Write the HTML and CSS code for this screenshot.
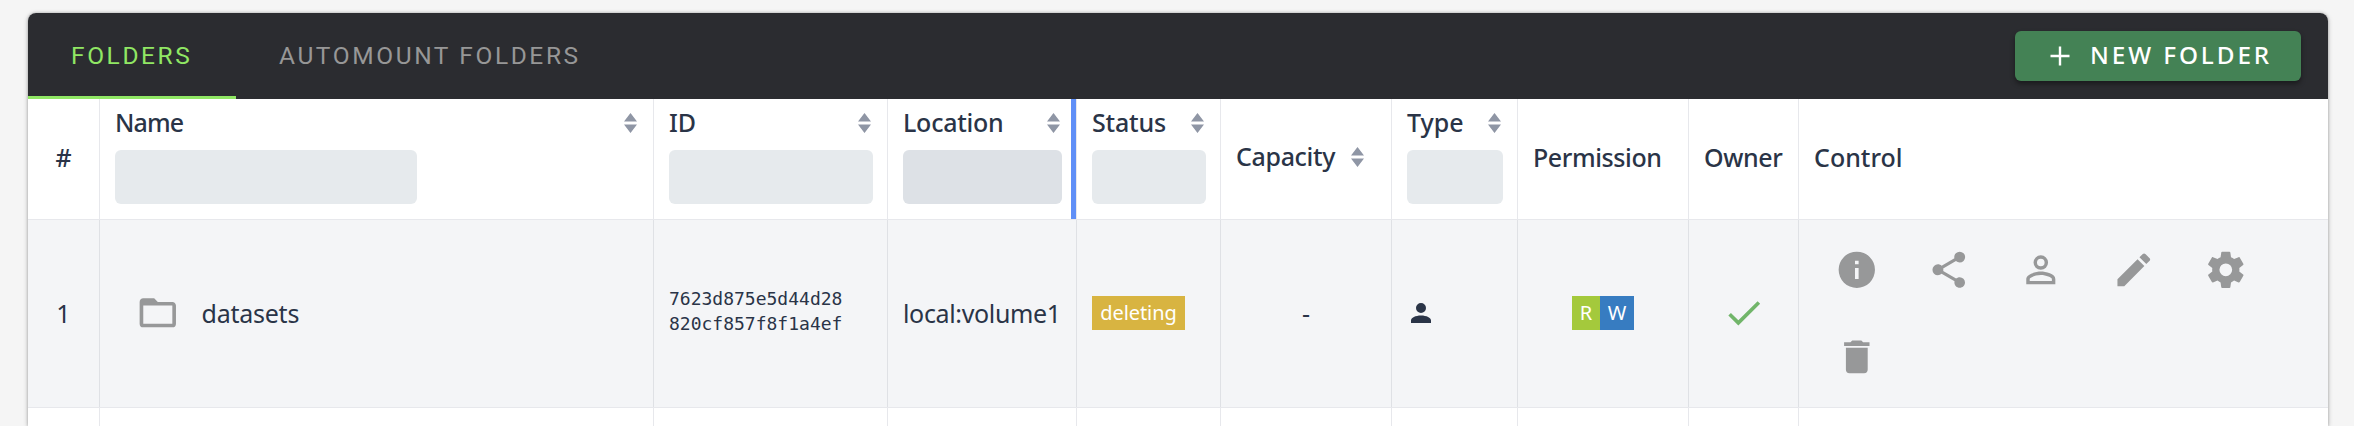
FILE: index.html
```html
<!DOCTYPE html>
<html lang="en">
<head>
<meta charset="utf-8">
<title>Folders</title>
<link rel="stylesheet" href="styles.css">
</head>
<body>
<svg class="defs" width="0" height="0" aria-hidden="true">
  <symbol id="sort" viewBox="0 0 13 20"><path d="M6.5 0 13 8.5H0zM6.5 20 0 11.5h13z"/></symbol>
</svg>
<main class="card">
  <header class="bar">
    <nav class="tabs">
      <a class="tab active"><span>FOLDERS</span></a>
      <a class="tab auto"><span>AUTOMOUNT FOLDERS</span></a>
    </nav>
    <button class="new"><svg width="20" height="20" viewBox="0 0 20 20"><path d="M10 .5v19M.5 10h19" stroke="#fff" stroke-width="2.4"/></svg><span>NEW FOLDER</span></button>
  </header>
  <section class="grid head">
    <div class="cell mid num"><span>#</span></div>
    <div class="cell"><div class="title"><span class="t-name">Name</span><svg class="sort"><use href="#sort"/></svg></div><div class="filter short"></div></div>
    <div class="cell"><div class="title"><span class="t-id">ID</span><svg class="sort"><use href="#sort"/></svg></div><div class="filter"></div></div>
    <div class="cell resizing"><div class="title"><span class="t-loc">Location</span><svg class="sort"><use href="#sort"/></svg></div><div class="filter hover"></div></div>
    <div class="cell"><div class="title"><span class="t-status">Status</span><svg class="sort"><use href="#sort"/></svg></div><div class="filter"></div></div>
    <div class="cell mid cap"><span class="t-cap">Capacity</span><svg class="sort"><use href="#sort"/></svg></div>
    <div class="cell"><div class="title"><span class="t-type">Type</span><svg class="sort"><use href="#sort"/></svg></div><div class="filter"></div></div>
    <div class="cell mid"><span class="t-perm">Permission</span></div>
    <div class="cell mid"><span class="t-owner">Owner</span></div>
    <div class="cell mid"><span class="t-ctl">Control</span></div>
  </section>
  <section class="grid row">
    <div class="cell mid num"><span>1</span></div>
    <div class="cell mid name"><svg class="icon" viewBox="0 0 24 24"><path d="M20,18H4V8H20M20,6H12L10,4H4C2.89,4 2,4.89 2,6V18A2,2 0 0,0 4,20H20A2,2 0 0,0 22,18V8C22,6.89 21.1,6 20,6Z"/></svg><span class="t-data">datasets</span></div>
    <div class="cell mid id"><span>7623d875e5d44d28<br>820cf857f8f1a4ef</span></div>
    <div class="cell mid"><span class="t-vol">local:volume1</span></div>
    <div class="cell mid"><span class="badge deleting">deleting</span></div>
    <div class="cell mid center dash"><span>-</span></div>
    <div class="cell mid type"><svg width="30" height="30" viewBox="0 0 24 24"><path d="M12,4A4,4 0 0,1 16,8A4,4 0 0,1 12,12A4,4 0 0,1 8,8A4,4 0 0,1 12,4M12,14C16.42,14 20,15.79 20,18V20H4V18C4,15.79 7.58,14 12,14Z"/></svg></div>
    <div class="cell mid center"><span class="badge r">R</span><span class="badge w">W</span></div>
    <div class="cell mid center check"><svg class="icon" viewBox="0 0 24 24"><path d="M21,7L9,19L3.5,13.5L4.91,12.09L9,16.17L19.59,5.59L21,7Z"/></svg></div>
    <div class="cell controls">
      <button><svg class="icon" viewBox="0 0 24 24"><path d="M13,9H11V7H13M13,17H11V11H13M12,2A10,10 0 0,0 2,12A10,10 0 0,0 12,22A10,10 0 0,0 22,12A10,10 0 0,0 12,2Z"/></svg></button>
      <button><svg class="icon" viewBox="0 0 24 24"><path d="M18,16.08C17.24,16.08 16.56,16.38 16.04,16.85L8.91,12.7C8.96,12.47 9,12.24 9,12C9,11.76 8.96,11.53 8.91,11.3L15.96,7.19C16.5,7.69 17.21,8 18,8A3,3 0 0,0 21,5A3,3 0 0,0 18,2A3,3 0 0,0 15,5C15,5.24 15.04,5.47 15.09,5.7L8.04,9.81C7.5,9.31 6.79,9 6,9A3,3 0 0,0 3,12A3,3 0 0,0 6,15C6.79,15 7.5,14.69 8.04,14.19L15.16,18.34C15.11,18.55 15.08,18.77 15.08,19C15.08,20.61 16.39,21.91 18,21.91C19.61,21.91 20.92,20.61 20.92,19A2.92,2.92 0 0,0 18,16.08Z"/></svg></button>
      <button><svg class="icon" viewBox="0 0 24 24"><path d="M12,4A4,4 0 0,1 16,8A4,4 0 0,1 12,12A4,4 0 0,1 8,8A4,4 0 0,1 12,4M12,5.9A2.1,2.1 0 0,0 9.9,8A2.1,2.1 0 0,0 12,10.1A2.1,2.1 0 0,0 14.1,8A2.1,2.1 0 0,0 12,5.9M12,13C14.67,13 20,14.33 20,17V20H4V17C4,14.33 9.33,13 12,13M12,14.9C9.03,14.9 5.9,16.36 5.9,17V18.1H18.1V17C18.1,16.36 14.97,14.9 12,14.9Z"/></svg></button>
      <button><svg class="icon" viewBox="0 0 24 24"><path d="M20.71,7.04C21.1,6.65 21.1,6 20.71,5.63L18.37,3.29C18,2.9 17.35,2.9 16.96,3.29L15.12,5.12L18.87,8.87M3,17.25V21H6.75L17.81,9.93L14.06,6.18L3,17.25Z"/></svg></button>
      <button><svg class="icon" viewBox="0 0 24 24"><path d="M12,15.5A3.5,3.5 0 0,1 8.5,12A3.5,3.5 0 0,1 12,8.5A3.5,3.5 0 0,1 15.5,12A3.5,3.5 0 0,1 12,15.5M19.43,12.97C19.47,12.65 19.5,12.33 19.5,12C19.5,11.67 19.47,11.34 19.43,11L21.54,9.37C21.73,9.22 21.78,8.95 21.66,8.73L19.66,5.27C19.54,5.05 19.27,4.96 19.05,5.05L16.56,6.05C16.04,5.66 15.5,5.32 14.87,5.07L14.5,2.42C14.46,2.18 14.25,2 14,2H10C9.75,2 9.54,2.18 9.5,2.42L9.13,5.07C8.5,5.32 7.96,5.66 7.44,6.05L4.95,5.05C4.73,4.96 4.46,5.05 4.34,5.27L2.34,8.73C2.21,8.95 2.27,9.22 2.46,9.37L4.57,11C4.53,11.34 4.5,11.67 4.5,12C4.5,12.33 4.53,12.65 4.57,12.97L2.46,14.63C2.27,14.78 2.21,15.05 2.34,15.27L4.34,18.73C4.46,18.95 4.73,19.03 4.95,18.95L7.44,17.94C7.96,18.34 8.5,18.68 9.13,18.93L9.5,21.58C9.54,21.82 9.75,22 10,22H14C14.25,22 14.46,21.82 14.5,21.58L14.87,18.93C15.5,18.67 16.04,18.34 16.56,17.94L19.05,18.95C19.27,19.03 19.54,18.95 19.66,18.73L21.66,15.27C21.78,15.05 21.73,14.78 21.54,14.63L19.43,12.97Z"/></svg></button>
      <button><svg class="icon" viewBox="0 0 24 24"><path d="M19,4H15.5L14.5,3H9.5L8.5,4H5V6H19M6,19A2,2 0 0,0 8,21H16A2,2 0 0,0 18,19V7H6V19Z"/></svg></button>
    </div>
  </section>
  <section class="grid rest">
    <div class="cell"></div><div class="cell"></div><div class="cell"></div><div class="cell"></div><div class="cell"></div><div class="cell"></div><div class="cell"></div><div class="cell"></div><div class="cell"></div><div class="cell"></div>
  </section>
</main>
</body>
</html>
```

FILE: styles.css
```css
* { box-sizing: border-box; }
html { background: #f5f5f5; }
body { margin: 0; height: 426px; overflow: hidden; padding: 13px 26px 0 28px; font-family: "Noto Sans", sans-serif; font-size: 25px; line-height: 34px; color: #2a3447; white-space: nowrap; }
.defs { position: absolute; }
.card { height: 413px; background: #fff; border-radius: 8px 8px 0 0; overflow: hidden; box-shadow: 0 1px 5px rgba(0,0,0,.25), 0 0 3px rgba(0,0,0,.2); }
.bar { height: 86px; background: #2b2c30; display: flex; justify-content: space-between; padding-right: 27px; align-items: center; }
.tabs { display: flex; height: 86px; font-family: Roboto, sans-serif; font-size: 24.5px; letter-spacing: 2.6px; }
.tab { display: flex; align-items: center; color: #979797; }
.tab.active { width: 208px; padding: 3px 0 0 43px; color: #90e764; border-bottom: 3px solid #90e764; }
.tab.auto { padding-left: 43px; }
button { border: 0; background: none; font: inherit; padding: 0; }
.new { width: 286px; height: 50px; border-radius: 6px; background: #448255; color: #fff; display: flex; align-items: center; padding-left: 35px; gap: 20px; font-weight: 500; font-size: 24.3px; letter-spacing: 2.9px; box-shadow: 0 3px 5px rgba(0,0,0,.4); }
.new span { padding-bottom: 2px; }
.grid { display: grid; grid-template-columns: 72px 554px 234px 189px 144px 171px 126px 171px 110px 1fr; border-bottom: 1px solid #e7e8ec; }
.head { height: 121px; font-weight: 500; }
.row { height: 188px; background: #f4f5f7; }
.rest { height: 18px; border-bottom: 0; }
.cell { border-right: 1px solid #e7e8ec; padding: 0 14px 0 15px; min-width: 0; }
.row .cell { border-color: #dfe1e5; }
.grid .cell:last-child { border-right: 0; }
.mid { display: flex; align-items: center; }
.head .mid { padding-bottom: 4px; }
.row .mid { padding-bottom: 1px; }
.num { justify-content: center; padding: 0; }
.title { display: flex; justify-content: space-between; align-items: center; height: 34px; margin-top: 7px; padding-right: 2px; }
.title span, .cap span { padding-bottom: 2px; }
.t-name { letter-spacing: -.9px; }
.t-loc { letter-spacing: -.25px; }
.t-status { letter-spacing: -.2px; }
.t-cap { letter-spacing: -.35px; }
.t-perm { letter-spacing: -.4px; }
.t-owner { letter-spacing: -.4px; }
.t-data { letter-spacing: -.25px; }
.t-vol { letter-spacing: -.35px; }
.sort { width: 13px; height: 20px; fill: #8f96a5; flex: none; }
.filter { height: 54px; margin-top: 10px; border-radius: 6px; background: #e6eaed; }
.filter.short { width: 302px; }
.filter.hover { background: #dde1e6; }
.resizing { position: relative; }
.resizing::after { content: ""; position: absolute; right: 0; top: 0; width: 5px; height: 120px; background: #5f8ff7; }
.cap { gap: 16px; }
.icon { width: 43.6px; height: 43.6px; fill: #979899; flex: none; }
.name { padding-left: 36px; gap: 22px; }
.row .id { font-family: "DejaVu Sans Mono", monospace; font-size: 18px; line-height: 24.7px; padding-bottom: 3px; }
.center { justify-content: center; padding: 0; }
.type { padding-left: 14px; fill: #2a3447; }
.check .icon { fill: #71b56a; }
.badge { height: 34px; line-height: 33px; font-size: 20px; color: #fff; text-align: center; }
.deleting { width: 93px; background: #d8b441; letter-spacing: -.1px; }
.r { width: 28px; background: #a4c93c; }
.w { width: 34px; background: #377cc1; }
.controls { display: flex; flex-wrap: wrap; align-content: flex-start; column-gap: 5.8px; padding: 6px 14px 0 14.6px; }
.controls button { width: 86.4px; height: 87.2px; display: flex; align-items: center; justify-content: center; }
```
